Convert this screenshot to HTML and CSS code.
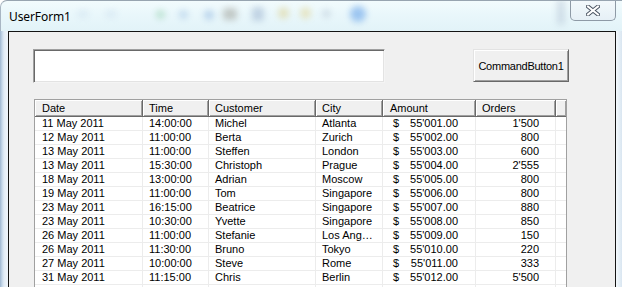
FILE: index.html
```html
<!DOCTYPE html>
<html>
<head>
<meta charset="utf-8">
<link rel="stylesheet" href="styles.css">
</head>
<body>
<div class="window">
  <div class="titlebar">
    <div class="blobs">
      <span class="blob b-green"></span>
      <span class="blob b-blue1"></span>
      <span class="blob b-blue2"></span>
      <span class="blob b-brown"></span>
      <span class="blob b-doc"></span>
      <span class="blob b-yel1"></span>
      <span class="blob b-yel2"></span>
      <span class="blob b-grey"></span>
      <span class="blob b-circle"></span>
      <span class="blob b-stripe"></span>
      <span class="blob b-faint1"></span>
      <span class="blob b-faint2"></span>
    </div>
    <span class="title">UserForm1</span>
    <div class="close">
      <svg width="14" height="11" viewBox="0 0 14 11">
        <path d="M2 1.5 L12 9.5 M12 1.5 L2 9.5" stroke="#4b5563" stroke-width="4" stroke-linecap="square" fill="none"/>
        <path d="M2 1.5 L12 9.5 M12 1.5 L2 9.5" stroke="#ffffff" stroke-width="2" stroke-linecap="square" fill="none"/>
      </svg>
    </div>
  </div>
  <div class="frame">
    <div class="edge-left"></div>
    <div class="client">
      <div class="controls">
        <div class="textbox"></div>
        <div class="cmd">CommandButton1</div>
      </div>
      <div class="listview">
        <div class="lv-head">
          <div>Date</div><div>Time</div><div>Customer</div><div>City</div><div class="h-amount">Amount</div><div>Orders</div><div></div>
        </div>
        <div class="lv-row"><div class="c-date">11 May 2011</div><div>14:00:00</div><div>Michel</div><div>Atlanta</div><div class="c-amt"><span>$</span><span>55'001.00</span></div><div class="c-num">1'500</div><div></div></div>
        <div class="lv-row"><div class="c-date">12 May 2011</div><div>11:00:00</div><div>Berta</div><div>Zurich</div><div class="c-amt"><span>$</span><span>55'002.00</span></div><div class="c-num">800</div><div></div></div>
        <div class="lv-row"><div class="c-date">13 May 2011</div><div>11:00:00</div><div>Steffen</div><div>London</div><div class="c-amt"><span>$</span><span>55'003.00</span></div><div class="c-num">600</div><div></div></div>
        <div class="lv-row"><div class="c-date">13 May 2011</div><div>15:30:00</div><div>Christoph</div><div>Prague</div><div class="c-amt"><span>$</span><span>55'004.00</span></div><div class="c-num">2'555</div><div></div></div>
        <div class="lv-row"><div class="c-date">18 May 2011</div><div>13:00:00</div><div>Adrian</div><div>Moscow</div><div class="c-amt"><span>$</span><span>55'005.00</span></div><div class="c-num">800</div><div></div></div>
        <div class="lv-row"><div class="c-date">19 May 2011</div><div>11:00:00</div><div>Tom</div><div>Singapore</div><div class="c-amt"><span>$</span><span>55'006.00</span></div><div class="c-num">800</div><div></div></div>
        <div class="lv-row"><div class="c-date">23 May 2011</div><div>16:15:00</div><div>Beatrice</div><div>Singapore</div><div class="c-amt"><span>$</span><span>55'007.00</span></div><div class="c-num">880</div><div></div></div>
        <div class="lv-row"><div class="c-date">23 May 2011</div><div>10:30:00</div><div>Yvette</div><div>Singapore</div><div class="c-amt"><span>$</span><span>55'008.00</span></div><div class="c-num">850</div><div></div></div>
        <div class="lv-row"><div class="c-date">26 May 2011</div><div>11:00:00</div><div>Stefanie</div><div>Los Ang…</div><div class="c-amt"><span>$</span><span>55'009.00</span></div><div class="c-num">150</div><div></div></div>
        <div class="lv-row"><div class="c-date">26 May 2011</div><div>11:30:00</div><div>Bruno</div><div>Tokyo</div><div class="c-amt"><span>$</span><span>55'010.00</span></div><div class="c-num">220</div><div></div></div>
        <div class="lv-row"><div class="c-date">27 May 2011</div><div>10:00:00</div><div>Steve</div><div>Rome</div><div class="c-amt"><span>$</span><span>55'011.00</span></div><div class="c-num">333</div><div></div></div>
        <div class="lv-row"><div class="c-date">31 May 2011</div><div>11:15:00</div><div>Chris</div><div>Berlin</div><div class="c-amt"><span>$</span><span>55'012.00</span></div><div class="c-num">5'500</div><div></div></div>
        <div class="lv-row"><div class="c-date"></div><div></div><div></div><div></div><div class="c-amt"></div><div class="c-num"></div><div></div></div>
      </div>
    </div>
    <div class="edge-right"></div>
  </div>
</div>
</body>
</html>
```

FILE: styles.css
```css
html, body {
  margin: 0;
  padding: 0;
  background: #ffffff;
}

.window {
  width: 622px;
  height: 287px;
  overflow: hidden;
  display: flex;
  flex-direction: column;
  font-family: "Liberation Sans", Arial, sans-serif;
  font-size: 11px;
  color: #000;
}

.titlebar {
  height: 31px;
  flex: none;
  box-sizing: border-box;
  position: relative;
  display: flex;
  align-items: center;
  padding: 1px 0 0 8px;
  border-top: 1px solid #97a4b0;
  border-left: 1px solid #a8b6c3;
  border-top-left-radius: 7px;
  background: linear-gradient(to bottom, #f2fbfd 0%, #e9f7fb 45%, #e2f3f8 100%);
  overflow: hidden;
}

.blobs {
  position: absolute;
  inset: 0;
}

.blob {
  position: absolute;
  border-radius: 50%;
  filter: blur(3px);
  opacity: 0.42;
}
.b-green { left: 155px; top: 9px; width: 9px; height: 9px; background: #7fc79a; }
.b-blue1 { left: 178px; top: 9px; width: 9px; height: 9px; background: #8fb6de; }
.b-blue2 { left: 203px; top: 9px; width: 10px; height: 10px; background: #7aa5d8; }
.b-brown { left: 222px; top: 7px; width: 14px; height: 12px; background: #8c8a80; border-radius: 30%; }
.b-doc { left: 251px; top: 6px; width: 12px; height: 14px; background: #8aa3c4; border-radius: 20%; }
.b-yel1 { left: 277px; top: 6px; width: 11px; height: 12px; background: #d9c672; }
.b-yel2 { left: 299px; top: 6px; width: 11px; height: 12px; background: #e0cd7a; }
.b-grey { left: 321px; top: 8px; width: 9px; height: 9px; background: #b0bfcf; }
.b-circle { left: 349px; top: 5px; width: 16px; height: 16px; background: #5f9ee8; opacity: 0.55; }
.b-stripe { left: 556px; top: -2px; width: 8px; height: 26px; background: #a8b8cc; border-radius: 3px; opacity: 0.4; }
.b-faint1 { left: 76px; top: 9px; width: 12px; height: 8px; background: #c7dcec; }
.b-faint2 { left: 104px; top: 9px; width: 12px; height: 8px; background: #c7dcec; }

.title {
  position: relative;
  font-family: "Noto Sans", "Open Sans", sans-serif;
  font-size: 12px;
  color: #000;
  letter-spacing: -0.1px;
}

.close {
  position: absolute;
  right: 6px;
  top: -1px;
  width: 46px;
  height: 21px;
  box-sizing: border-box;
  border: 1px solid #8e9aa6;
  border-top: none;
  border-radius: 0 0 5px 5px;
  background: linear-gradient(to bottom, #f3f9fc, #e6f0f6);
  display: flex;
  align-items: center;
  justify-content: center;
}

.frame {
  flex: 1;
  display: flex;
  min-height: 0;
}

.edge-left {
  width: 8px;
  flex: none;
  background: linear-gradient(to right, #9fb7d0 0px, #c4d6e8 2px, #e2ecf6 4px, #eef4fa 7px);
}

.client {
  width: 608px;
  flex: none;
  box-sizing: border-box;
  border: 1px solid #141414;
  border-bottom: none;
  background: #f0f0f0;
  padding: 17px 0 0 24px;
  overflow: hidden;
}

.edge-right {
  flex: 1;
  background: linear-gradient(to right, #f4f9fc, #d9e6f1);
}

.controls {
  display: flex;
  align-items: flex-start;
}

.textbox {
  width: 352px;
  height: 34px;
  box-sizing: border-box;
  background: #fff;
  border: 1px solid;
  border-color: #a0a0a0 #f4f4f4 #f4f4f4 #a0a0a0;
  box-shadow: inset 1px 1px #696969, inset -1px -1px #e3e3e3;
}

.cmd {
  margin-left: 88px;
  width: 96px;
  height: 33px;
  box-sizing: border-box;
  border: 1px solid;
  border-color: #e3e3e3 #696969 #696969 #e3e3e3;
  box-shadow: inset 1px 1px #ffffff, inset -1px -1px #a0a0a0;
  background: #f0f0f0;
  display: flex;
  align-items: center;
  justify-content: center;
  padding-top: 1px;
  letter-spacing: -0.25px;
}

.listview {
  margin-top: 16px;
  margin-left: 1px;
  width: 533px;
  box-sizing: border-box;
  border: 1px solid #a0a0a0;
  border-bottom: none;
  background: #fff;
}

.lv-head,
.lv-row {
  display: grid;
  grid-template-columns: 108px 66px 107px 67px 93px 80px 10px;
}

.lv-head > div {
  height: 17px;
  box-sizing: border-box;
  background: #f0f0f0;
  border-right: 1px solid #696969;
  border-bottom: 1px solid #696969;
  box-shadow: inset 1px 1px #ffffff, inset -1px -1px #a0a0a0;
  padding-left: 6px;
  line-height: 16px;
  white-space: nowrap;
  overflow: hidden;
}
.lv-head > div:first-child { padding-left: 7px; }
.lv-head > div:last-child { border-right: none; }
.lv-head > .h-amount { padding-left: 7px; }

.lv-row > div {
  height: 14px;
  box-sizing: border-box;
  border-right: 1px solid #ececec;
  border-bottom: 1px solid #ececec;
  padding-left: 6px;
  line-height: 13px;
  white-space: nowrap;
  overflow: hidden;
}
.lv-row > div:last-child { border-right: none; }
.lv-row > .c-date { padding-left: 7px; }

.lv-row > .c-amt {
  display: flex;
  padding-left: 10px;
  padding-right: 17px;
}
.c-amt > span:last-child { margin-left: auto; }

.lv-row > .c-num {
  text-align: right;
  padding-right: 16px;
}
```
